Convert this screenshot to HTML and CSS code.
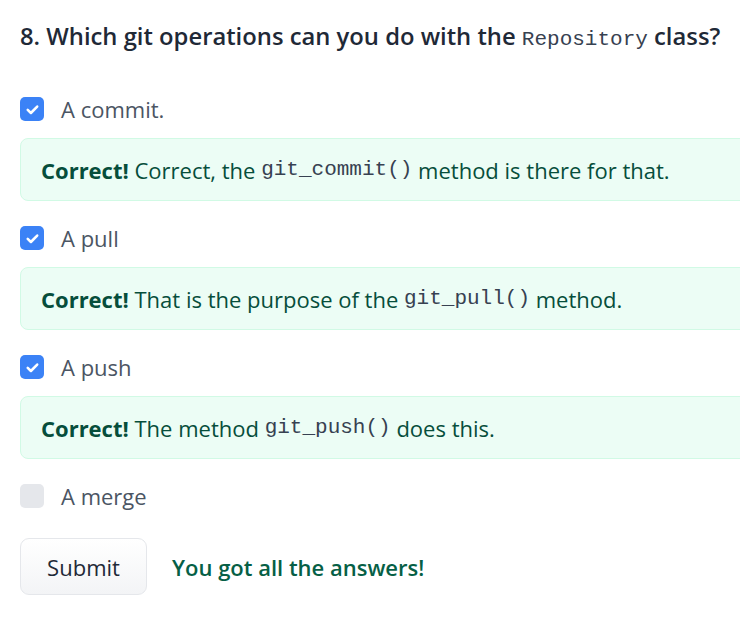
FILE: index.html
```html
<!DOCTYPE html>
<html>
<head>
<meta charset="utf-8">
<link rel="stylesheet" href="styles.css">
</head>
<body>
<div class="quiz">
  <h2 class="question">8. Which git operations can you do with the <code>Repository</code> class?</h2>
  <div class="options">
    <div class="option">
      <label class="choice">
        <span class="box checked"><svg viewBox="0 0 16 16" width="17" height="17"><path d="M3.5 8.4l3 2.9 5.9-6.1" fill="none" stroke="#fff" stroke-width="2.4" stroke-linecap="round" stroke-linejoin="round"/></svg></span>
        <span class="label">A commit.</span>
      </label>
      <div class="feedback"><strong>Correct!</strong> Correct, the <code>git_commit()</code> method is there for that.</div>
    </div>
    <div class="option">
      <label class="choice">
        <span class="box checked"><svg viewBox="0 0 16 16" width="17" height="17"><path d="M3.5 8.4l3 2.9 5.9-6.1" fill="none" stroke="#fff" stroke-width="2.4" stroke-linecap="round" stroke-linejoin="round"/></svg></span>
        <span class="label">A pull</span>
      </label>
      <div class="feedback"><strong>Correct!</strong> That is the purpose of the <code>git_pull()</code> method.</div>
    </div>
    <div class="option">
      <label class="choice">
        <span class="box checked"><svg viewBox="0 0 16 16" width="17" height="17"><path d="M3.5 8.4l3 2.9 5.9-6.1" fill="none" stroke="#fff" stroke-width="2.4" stroke-linecap="round" stroke-linejoin="round"/></svg></span>
        <span class="label">A push</span>
      </label>
      <div class="feedback"><strong>Correct!</strong> The method <code>git_push()</code> does this.</div>
    </div>
    <div class="option">
      <label class="choice">
        <span class="box"></span>
        <span class="label">A merge</span>
      </label>
    </div>
  </div>
  <div class="actions">
    <button class="submit">Submit</button>
    <span class="result">You got all the answers!</span>
  </div>
</div>
</body>
</html>
```
FILE: styles.css
```css
html, body {
  margin: 0;
  padding: 0;
  background: #ffffff;
  overflow: hidden;
}
body {
  font-family: "Open Sans", "Lato", sans-serif;
  width: 740px;
}
.quiz {
  padding: 20px 0 0 20px;
}
.question {
  margin: 0;
  font-size: 23.8px;
  line-height: 32px;
  font-weight: 600;
  color: #1f2937;
}
.question code {
  font-family: "Liberation Mono", monospace;
  font-weight: 400;
  font-size: 21px;
  color: #374151;
}
.options {
  margin-top: 41px;
  display: flex;
  flex-direction: column;
  gap: 25px;
}
.option {
  display: flex;
  flex-direction: column;
  gap: 17px;
}
.choice {
  display: flex;
  align-items: center;
  gap: 17px;
  height: 24px;
}
.box {
  width: 24px;
  height: 24px;
  border-radius: 5px;
  background: #e5e7eb;
  display: flex;
  align-items: center;
  justify-content: center;
  flex: none;
}
.box.checked {
  background: #3b82f6;
}
.label {
  font-size: 22px;
  color: #4b5563;
}
.feedback {
  width: 740px;
  box-sizing: border-box;
  height: 63px;
  display: flex;
  align-items: center;
  padding: 0 20px;
  background: #ecfdf5;
  border: 1px solid #d1fae5;
  border-radius: 8px;
  font-size: 22px;
  color: #064e3b;
  white-space: pre;
}
.feedback strong {
  font-weight: 700;
}
.feedback code {
  font-family: "Liberation Mono", monospace;
  font-size: 21px;
  color: #374151;
}
.actions {
  margin-top: 30px;
  display: flex;
  align-items: center;
  gap: 25px;
}
.submit {
  width: 127px;
  height: 57px;
  border: 1px solid #e5e7eb;
  border-radius: 9px;
  background: linear-gradient(#ffffff, #f3f4f6);
  font-family: inherit;
  font-size: 22px;
  color: #1f2937;
  padding: 0;
}
.result {
  font-size: 22px;
  font-weight: 600;
  color: #065f46;
}
```
